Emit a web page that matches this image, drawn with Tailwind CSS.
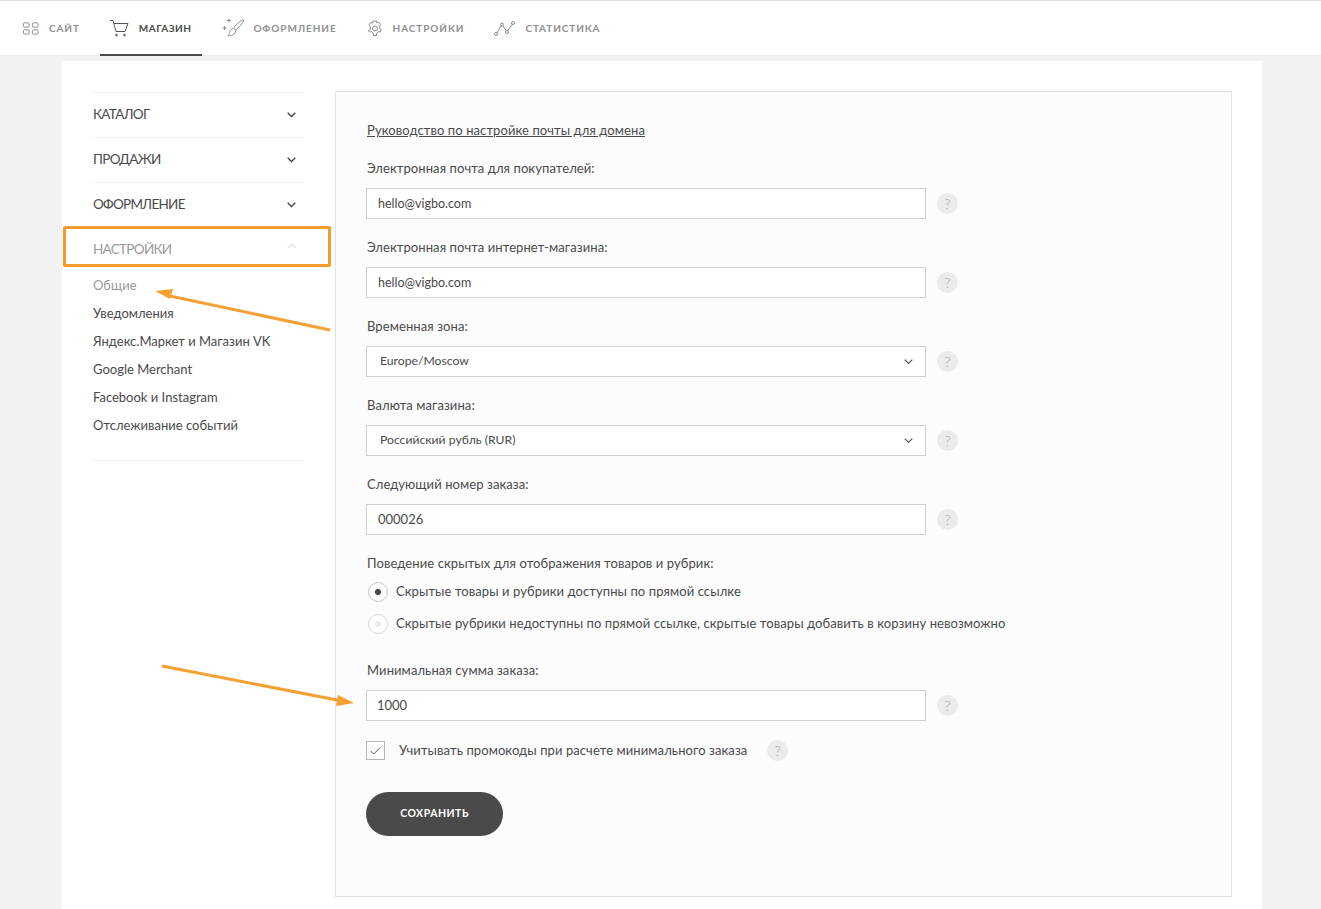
<!DOCTYPE html>
<html lang="ru">
<head>
<meta charset="UTF-8">
<title>Настройки магазина</title>
<script src="https://cdn.jsdelivr.net/npm/@tailwindcss/browser@4"></script>
</head>
<body class="bg-[#f2f2f2] h-[909px] overflow-hidden font-['Lato','Open_Sans',sans-serif] text-[#4a4a4a] relative">

<!-- top nav -->
<nav class="h-[56px] bg-white border-t border-t-[#e3e3e3] border-b border-b-[#ececec] flex pl-[23px] text-[10px] font-bold tracking-[0.9px] text-[#8f8f8f]">
  <a class="flex items-center gap-[10px] pr-[20px]">
    <svg width="16" height="13" viewBox="0 0 17 13" fill="none" stroke="#8a8a8a" stroke-width="1"><rect x="0.5" y="0.5" width="6" height="4.5" rx="1"/><rect x="10" y="0.5" width="6" height="4.5" rx="1"/><rect x="0.5" y="8" width="6" height="4.5" rx="1"/><rect x="10" y="8" width="6" height="4.5" rx="1"/></svg>
    САЙТ
  </a>
  <a class="flex items-center gap-[10px] pl-[10px] pr-[11px] pt-[1px] h-[55px] border-b-2 border-[#4a4a4a] text-[#4a4a4a] tracking-[0.5px]">
    <svg width="19" height="17" viewBox="0 0 19 17" fill="none" stroke="#555" stroke-width="1"><path d="M0 .5h3l3 11h9l3-8H4"/><circle cx="6.500" cy="15" r=".8" fill="#555"/><circle cx="14.500" cy="15" r=".8" fill="#555"/></svg>
    МАГАЗИН
  </a>
  <a class="flex items-center gap-[9px] pl-[20px] pr-[30px]">
    <svg width="22" height="20" viewBox="0 0 22 20" fill="none" stroke="#8a8a8a" stroke-width="1"><path d="M21.500 2c-2-.5-8 5-10 8l2 2c3-2 8.500-8 8-10z"/><path d="M11 10.500c-2 .5-3 2-3.500 4-.3 1.500-1.500 3-1.500 3s4 .5 6-1.500c1.500-1.500 2-3 1.500-3.500"/><path d="M7 .5v4M5 2.500h4M2.500 8v4M.5 10h4"/></svg>
    ОФОРМЛЕНИЕ
  </a>
  <a class="flex items-center gap-[10px] pr-[30px]">
    <svg width="16" height="17" viewBox="0 0 16 17" fill="none" stroke="#8a8a8a" stroke-width="1"><circle cx="8" cy="8.500" r="2.500"/><path d="M6.500 1h3l.5 2 1.800-.7 1.700 2.200-1.300 1.700.3 2.300 1.800 1-1.200 2.500-2-.3-1.300 1.500-.3 2.300H6.500l-.3-2.300-1.500-1.500-2 .3L1.500 10.500l1.800-1V7L2 4.700 3.700 2.500l1.800.7.500-2.200z"/></svg>
    НАСТРОЙКИ
  </a>
  <a class="flex items-center gap-[10px]">
    <svg width="21" height="15" viewBox="0 0 21 15" fill="none" stroke="#8a8a8a" stroke-width="1"><circle cx="2" cy="13" r="1.500"/><circle cx="8" cy="3.500" r="1.500"/><circle cx="13" cy="11" r="1.500"/><circle cx="19" cy="2" r="1.500"/><path d="M3 11.700 7.200 4.800M8.800 4.800 12.200 9.700M13.800 9.700 18.200 3.300"/></svg>
    СТАТИСТИКА
  </a>
</nav>

<!-- white card -->
<main class="bg-white w-[1200px] ml-[62px] mt-[5px] h-[860px] flex pt-[30px] pl-[31px]">
  <!-- sidebar -->
  <aside class="w-[211px] mr-[31px] mt-[1px] h-[369px] text-[13.5px] tracking-[-0.7px] border-b border-[#f0f0f0]">
    <div class="h-[45px] flex items-center justify-between border-t border-[#f0f0f0] pr-[8px] pb-[2px]">КАТАЛОГ
      <svg class="mt-[1px]" width="9" height="6" viewBox="0 0 9 6" fill="none" stroke="#444" stroke-width="1.300"><path d="m.7.7 3.800 3.800L8.300.7"/></svg>
    </div>
    <div class="h-[45px] flex items-center justify-between border-t border-[#f0f0f0] pr-[8px] pb-[2px]">ПРОДАЖИ
      <svg class="mt-[1px]" width="9" height="6" viewBox="0 0 9 6" fill="none" stroke="#444" stroke-width="1.300"><path d="m.7.7 3.800 3.800L8.300.7"/></svg>
    </div>
    <div class="h-[45px] flex items-center justify-between border-t border-[#f0f0f0] pr-[8px] pb-[2px]">ОФОРМЛЕНИЕ
      <svg class="mt-[1px]" width="9" height="6" viewBox="0 0 9 6" fill="none" stroke="#444" stroke-width="1.300"><path d="m.7.7 3.800 3.800L8.300.7"/></svg>
    </div>
    <div class="h-[45px] flex items-center justify-between border-t border-[#f0f0f0] pr-[8px] pb-[2px] text-[#9a9a9a]">НАСТРОЙКИ
      <svg class="mb-[7px]" width="9" height="6" viewBox="0 0 9 6" fill="none" stroke="#c4c4c4" stroke-width="1"><path d="M.7 5 4.500 1.200 8.300 5"/></svg>
    </div>
    <ul class="text-[13px] tracking-normal leading-[28px] -mt-[1px]">
      <li class="text-[#9a9a9a]">Общие</li>
      <li>Уведомления</li>
      <li>Яндекс.Маркет и Магазин VK</li>
      <li>Google Merchant</li>
      <li>Facebook и Instagram</li>
      <li>Отслеживание событий</li>
    </ul>
  </aside>

  <!-- form panel -->
  <section class="w-[897px] h-[806px] bg-[#fcfcfc] border border-[#e3e3e3] pl-[30px] pt-[29px] text-[13px] tracking-[0.09px]">
    <a class="underline leading-[18px] block pl-[1px]">Руководство по настройке почты для домена</a>

    <label class="block mt-[20px] pl-[1px] leading-[18px]">Электронная почта для покупателей:</label>
    <div class="flex items-center mt-[11px]">
      <div class="w-[560px] h-[31px] border border-[#cfcfcf] bg-white px-[11px] pt-[2px] flex items-center text-[12.5px] tracking-normal">hello@vigbo.com</div>
      <span class="w-[21px] h-[21px] rounded-full bg-[#ebebeb] text-[#a8a8a8] text-[14px] font-light flex items-center justify-center ml-[11px]">?</span>
    </div>

    <label class="block mt-[19px] pl-[1px] leading-[18px]">Электронная почта интернет-магазина:</label>
    <div class="flex items-center mt-[11px]">
      <div class="w-[560px] h-[31px] border border-[#cfcfcf] bg-white px-[11px] pt-[2px] flex items-center text-[12.5px] tracking-normal">hello@vigbo.com</div>
      <span class="w-[21px] h-[21px] rounded-full bg-[#ebebeb] text-[#a8a8a8] text-[14px] font-light flex items-center justify-center ml-[11px]">?</span>
    </div>

    <label class="block mt-[19px] pl-[1px] leading-[18px]">Временная зона:</label>
    <div class="flex items-center mt-[11px]">
      <div class="w-[560px] h-[31px] border border-[#cfcfcf] bg-white pl-[13px] pr-[12px] flex items-center justify-between text-[12.2px] tracking-normal">Europe/Moscow
        <svg width="9" height="6" viewBox="0 0 9 6" fill="none" stroke="#555" stroke-width="1.200"><path d="m.7.7 3.800 3.800L8.300.7"/></svg>
      </div>
      <span class="w-[21px] h-[21px] rounded-full bg-[#ebebeb] text-[#a8a8a8] text-[14px] font-light flex items-center justify-center ml-[11px]">?</span>
    </div>

    <label class="block mt-[19px] pl-[1px] leading-[18px]">Валюта магазина:</label>
    <div class="flex items-center mt-[11px]">
      <div class="w-[560px] h-[31px] border border-[#cfcfcf] bg-white pl-[13px] pr-[12px] flex items-center justify-between text-[12.2px] tracking-normal">Российский рубль (RUR)
        <svg width="9" height="6" viewBox="0 0 9 6" fill="none" stroke="#555" stroke-width="1.200"><path d="m.7.7 3.800 3.800L8.300.7"/></svg>
      </div>
      <span class="w-[21px] h-[21px] rounded-full bg-[#ebebeb] text-[#a8a8a8] text-[14px] font-light flex items-center justify-center ml-[11px]">?</span>
    </div>

    <label class="block mt-[19px] pl-[1px] leading-[18px]">Следующий номер заказа:</label>
    <div class="flex items-center mt-[11px]">
      <div class="w-[560px] h-[31px] border border-[#cfcfcf] bg-white px-[11px] flex items-center tracking-normal">000026</div>
      <span class="w-[21px] h-[21px] rounded-full bg-[#ebebeb] text-[#a8a8a8] text-[14px] font-light flex items-center justify-center ml-[11px]">?</span>
    </div>

    <label class="block mt-[19px] pl-[1px] leading-[18px]">Поведение скрытых для отображения товаров и рубрик:</label>
    <div class="flex items-center gap-[8px] mt-[9px] h-[22px] pl-[2px]">
      <span class="w-[20px] h-[20px] rounded-full border-[1.5px] border-[#c8c8c8] bg-white flex items-center justify-center"><i class="w-[6px] h-[6px] rounded-full bg-[#444] block"></i></span>
      Скрытые товары и рубрики доступны по прямой ссылке
    </div>
    <div class="flex items-center gap-[8px] mt-[10px] h-[22px] pl-[2px]">
      <span class="w-[20px] h-[20px] rounded-full border-[1.5px] border-[#d8d8d8] bg-white flex items-center justify-center"><i class="w-[6px] h-[6px] rounded-full bg-[#ebebeb] block"></i></span>
      Скрытые рубрики недоступны по прямой ссылке, скрытые товары добавить в корзину невозможно
    </div>

    <label class="block mt-[26px] pl-[1px] leading-[18px]">Минимальная сумма заказа:</label>
    <div class="flex items-center mt-[11px]">
      <div class="w-[560px] h-[31px] border border-[#cfcfcf] bg-white pl-[10px] pr-[11px] flex items-center tracking-normal">1000</div>
      <span class="w-[21px] h-[21px] rounded-full bg-[#ebebeb] text-[#a8a8a8] text-[14px] font-light flex items-center justify-center ml-[11px]">?</span>
    </div>

    <div class="flex items-center mt-[19px] h-[21px]">
      <span class="w-[19px] h-[19px] border border-[#b5b5b5] bg-white flex items-center justify-center mr-[14px]">
        <svg width="11" height="8" viewBox="0 0 11 8" fill="none" stroke="#555" stroke-width="1"><path d="m.7 4 3 3 6.500-6.500"/></svg>
      </span>
      Учитывать промокоды при расчете минимального заказа
      <span class="w-[21px] h-[21px] rounded-full bg-[#ebebeb] text-[#a8a8a8] text-[14px] font-light flex items-center justify-center ml-[20px]">?</span>
    </div>

    <button class="block mt-[31px] w-[137px] h-[44px] rounded-full bg-[#4a4a4a] text-white text-[10.5px] font-bold tracking-[0.5px]">СОХРАНИТЬ</button>
  </section>
</main>

<!-- annotation overlays -->
<div class="absolute left-[63px] top-[226px] w-[268px] h-[41px] border-[3px] border-[#f39c2d] rounded-[2px]"></div>
<svg class="absolute left-0 top-0 pointer-events-none" width="400" height="720" fill="#f5a033" stroke="none">
  <path d="M330 330 170 296" stroke="#f5a033" stroke-width="3" fill="none"/>
  <path d="m155 291 18-2-3 10z"/>
  <path d="M162 666 342 701" stroke="#f5a033" stroke-width="3" fill="none"/>
  <path d="m354 703-18 3 2-11z"/>
</svg>
</body>
</html>
